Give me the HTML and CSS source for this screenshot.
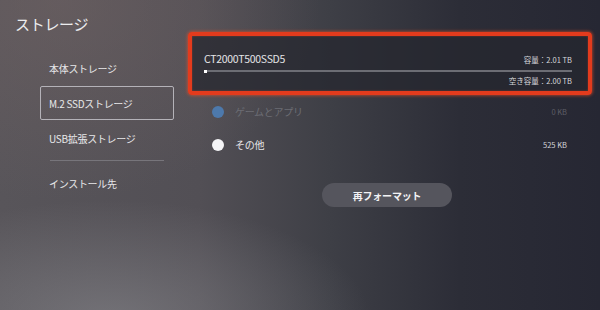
FILE: index.html
```html
<!DOCTYPE html>
<html lang="ja">
<head>
<meta charset="utf-8">
<title>ストレージ</title>
<link rel="stylesheet" href="styles.css">
</head>
<body>
<div class="screen">
  <aside class="side">
    <h1 class="title">ストレージ</h1>
    <nav class="menu">
      <div class="item">本体ストレージ</div>
      <div class="item active">M.2 SSDストレージ</div>
      <div class="item">USB拡張ストレージ</div>
      <div class="divider"></div>
      <div class="item">インストール先</div>
    </nav>
  </aside>
  <main class="main">
    <section class="card">
      <div class="card-row">
        <span class="drive">CT2000T500SSD5</span>
        <span class="meta">容量：2.01 TB</span>
      </div>
      <div class="bar"><span class="bar-used"></span></div>
      <div class="card-row end">
        <span class="meta">空き容量：2.00 TB</span>
      </div>
    </section>
    <ul class="legend">
      <li class="legend-item dim">
        <span class="dot blue"></span>
        <span class="legend-label">ゲームとアプリ</span>
        <span class="legend-size">0 KB</span>
      </li>
      <li class="legend-item">
        <span class="dot white"></span>
        <span class="legend-label">その他</span>
        <span class="legend-size">525 KB</span>
      </li>
    </ul>
    <div class="actions">
      <button class="btn">再フォーマット</button>
    </div>
  </main>
</div>
</body>
</html>
```
FILE: styles.css
```css
html, body {
  margin: 0;
  padding: 0;
}
body {
  width: 600px;
  height: 310px;
  overflow: hidden;
  font-family: "Noto Sans CJK JP", "Noto Sans", sans-serif;
  color: #e6e6e8;
}
.screen {
  width: 600px;
  height: 310px;
  display: flex;
  background:
    radial-gradient(ellipse 260px 120px at 110px 320px, rgba(140,140,145,0.55), rgba(140,140,145,0) 100%),
    radial-gradient(ellipse 260px 200px at 60px 0px, rgba(115,100,100,0.5), rgba(115,100,100,0) 100%),
    linear-gradient(90deg, #58555a 0px, #524f55 200px, #3e3f46 330px, #2c2d37 460px, #262733 600px);
}
.side {
  width: 188px;
  flex: none;
  display: flex;
  flex-direction: column;
}
.title {
  margin: 13px 0 0 15px;
  font-size: 15px;
  font-weight: 400;
  line-height: 22px;
  color: #ececee;
  letter-spacing: -0.3px;
}
.menu {
  margin: 16px 0 0 40px;
  width: 134px;
  display: flex;
  flex-direction: column;
}
.item {
  height: 34px;
  box-sizing: border-box;
  padding-left: 8px;
  display: flex;
  align-items: center;
  font-size: 10px;
  letter-spacing: -0.3px;
  color: #e8e8ea;
  border: 1px solid transparent;
  border-radius: 2px;
}
.item.active {
  border-color: #b4b2b8;
  margin-top: 1px;
  margin-bottom: 1px;
}
.divider {
  height: 1px;
  margin: 5px 10px 5px 10px;
  background: #77757b;
}
.main {
  flex: 1;
  display: flex;
  flex-direction: column;
  padding-top: 32px;
  padding-right: 8px;
}
.card {
  height: 63px;
  box-sizing: border-box;
  border: 4px solid #e33b1d;
  border-radius: 4px;
  box-shadow: 0 0 3px 1px rgba(240,80,40,0.55), inset 0 0 2px rgba(240,80,40,0.5);
  background: rgba(38,39,47,0.75);
  padding: 15px 16px 0 12px;
  display: flex;
  flex-direction: column;
}
.card-row {
  display: flex;
  justify-content: space-between;
  align-items: flex-end;
  height: 15px;
}
.card-row.end {
  justify-content: flex-end;
  margin-top: 3px;
  height: 12px;
}
.drive {
  font-size: 10.5px;
  letter-spacing: -0.3px;
  color: #e4e4e6;
  line-height: 15px;
}
.meta {
  font-size: 7.5px;
  color: #d8d8dc;
  line-height: 12px;
}
.bar {
  margin-top: 4px;
  height: 2px;
  background: #6c6d74;
}
.bar-used {
  display: block;
  width: 3px;
  height: 3px;
  margin-top: -0.5px;
  background: #ffffff;
}
.legend {
  list-style: none;
  margin: 0;
  padding: 0 25px 0 24px;
  display: flex;
  flex-direction: column;
}
.legend-item {
  height: 33px;
  display: flex;
  align-items: center;
}
.dot {
  width: 12px;
  height: 12px;
  border-radius: 50%;
  flex: none;
}
.dot.blue { background: #4d79ac; }
.dot.white { background: #f4f4f6; }
.legend-label {
  margin-left: 11px;
  font-size: 10px;
  letter-spacing: -0.3px;
  flex: 1;
}
.legend-size {
  font-size: 7.5px;
  color: #d4d4d8;
}
.dim .legend-label { color: #6c6d74; }
.dim .legend-size { color: #5d5e66; }
.actions {
  display: flex;
  justify-content: center;
  margin-top: 22px;
  padding-right: 6px;
}
.btn {
  width: 130px;
  height: 24px;
  border: none;
  border-radius: 12px;
  background: #55555d;
  color: #f2f2f4;
  font-family: "Noto Sans CJK JP", "Noto Sans", sans-serif;
  font-size: 10px;
  font-weight: 700;
  letter-spacing: -0.2px;
  padding: 0;
}
```
